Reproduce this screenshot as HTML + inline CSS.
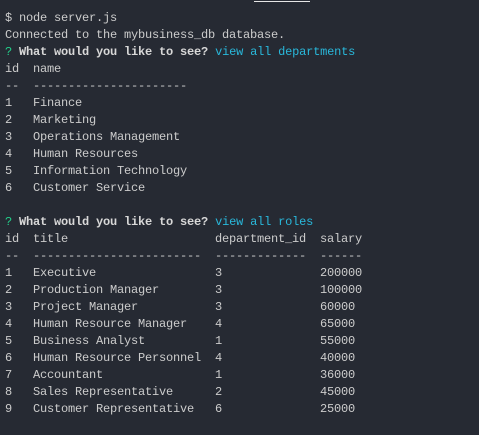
<!DOCTYPE html>
<html><head><meta charset="utf-8"><style>
html,body{margin:0;padding:0;}
body{width:479px;height:435px;background:#262a33;overflow:hidden;position:relative;}
.bar{position:absolute;left:254px;top:1px;width:56px;height:1px;background:#e6e6e6;}
pre{margin:0;position:absolute;left:5px;top:10px;font-family:"Liberation Mono",monospace;font-size:12px;letter-spacing:-0.2px;line-height:17px;color:#cccccc;white-space:pre;}
.g{color:#23d18b;}
.c{color:#29b8db;}
b{font-weight:bold;color:#d8d8d8;}
</style></head><body>
<div class="bar"></div>
<pre>$ node server.js
Connected to the mybusiness_db database.
<span class="g">?</span> <b>What would you like to see?</b> <span class="c">view all departments</span>
id  name
--  ----------------------
1   Finance
2   Marketing
3   Operations Management
4   Human Resources
5   Information Technology
6   Customer Service

<span class="g">?</span> <b>What would you like to see?</b> <span class="c">view all roles</span>
id  title                     department_id  salary
--  ------------------------  -------------  ------
1   Executive                 3              200000
2   Production Manager        3              100000
3   Project Manager           3              60000
4   Human Resource Manager    4              65000
5   Business Analyst          1              55000
6   Human Resource Personnel  4              40000
7   Accountant                1              36000
8   Sales Representative      2              45000
9   Customer Representative   6              25000</pre>
</body></html>
